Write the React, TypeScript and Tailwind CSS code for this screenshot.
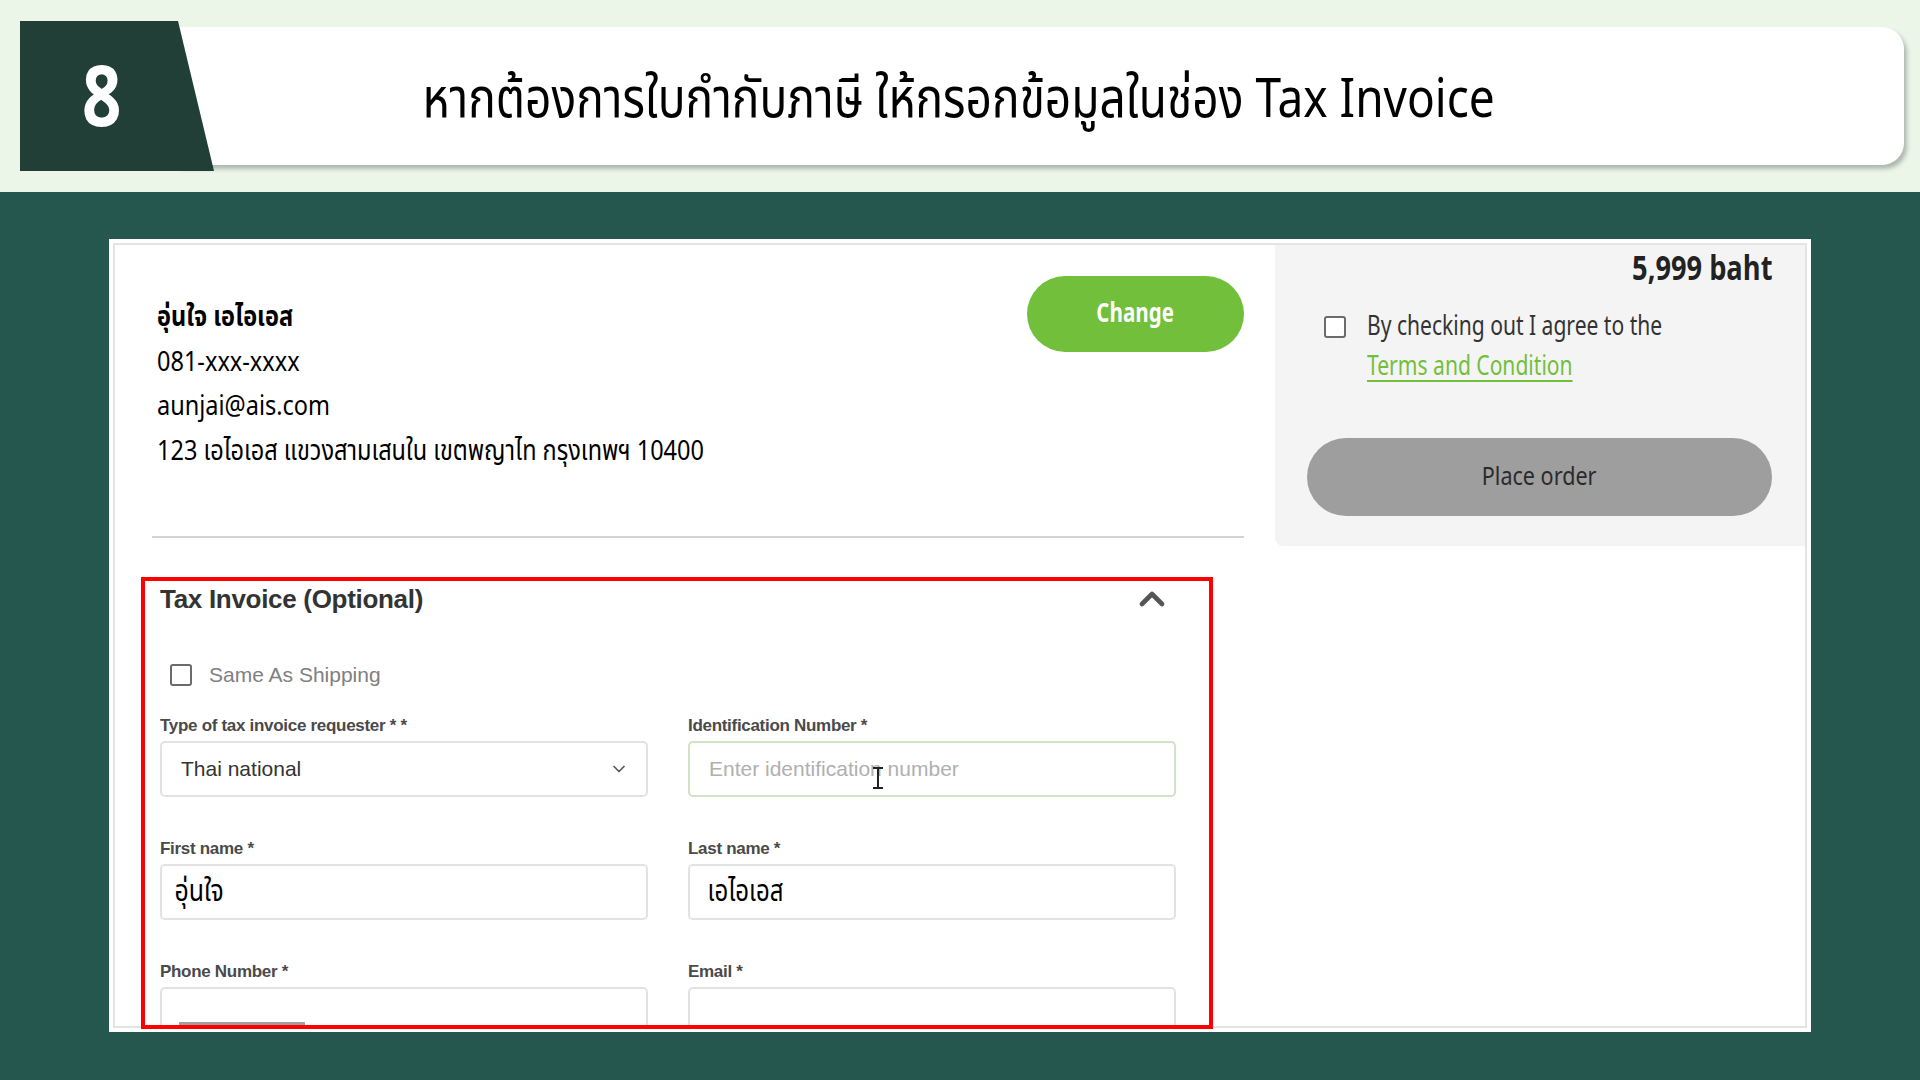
import { ChevronDown, ChevronUp } from "lucide-react";

// ฟอนต์ในภาพต้นฉบับเป็นแบบแคบ จึงบีบแนวนอนด้วย scale-x
const THAI = "font-['Noto_Sans_Thai','Noto_Sans',sans-serif]";
const SANS = "font-['Liberation_Sans','Noto_Sans_Thai','Noto_Sans',sans-serif]";

function Label({ text }: { text: string }) {
  return (
    <div className={`${SANS} h-[20px] text-[17px] leading-[20px] font-bold text-[#4a4a4a] tracking-[-0.3px]`}>
      {text}
    </div>
  );
}

function Field({ label, children }: { label: string; children?: React.ReactNode }) {
  return (
    <div className="flex flex-col">
      <Label text={label} />
      <div className="mt-[5px] h-[56px] rounded-[5px] border-2 border-[#e2e2e2] bg-white flex items-center relative">
        {children}
      </div>
    </div>
  );
}

function Box() {
  return <div className="w-[22px] h-[22px] rounded-[3px] border-2 border-[#6b6b6b] bg-white shrink-0" />;
}

export default function App() {
  return (
    <div className="w-[1920px] h-[1080px] overflow-hidden bg-[#26574e] flex flex-col">
      {/* หัวข้อขั้นตอน */}
      <div className="h-[192px] shrink-0 bg-[#ebf6e9] flex items-start pl-[20px] pt-[21px]">
        <div className="relative z-10 w-[194px] h-[150px] bg-[#213f36] [clip-path:polygon(0_0,158px_0,100%_100%,0_100%)] flex items-center pl-[62px] pt-[10px]">
          <span className={`${THAI} inline-block origin-left scale-x-[0.82] text-white text-[84px] leading-none font-bold`}>8</span>
        </div>
        <div className="-ml-[36px] mt-[6px] h-[138px] w-[1726px] bg-white rounded-r-[22px] shadow-[3px_4px_4px_rgba(0,0,0,0.25)] flex items-center justify-center pr-[164px] pt-[9px]">
          <span className={`${THAI} inline-block origin-center scale-x-[0.837] text-[55px] text-black leading-none whitespace-nowrap`}>
            หากต้องการใบกำกับภาษี ให้กรอกข้อมูลในช่อง Tax Invoice
          </span>
        </div>
      </div>

      {/* ภาพหน้าจอ checkout */}
      <div className="ml-[109px] mt-[47px] w-[1702px] h-[793px] shrink-0 bg-white p-[4px] overflow-hidden">
        <div className="h-full border-2 border-[#e4e4e4] flex">
          {/* คอลัมน์ซ้าย */}
          <div className="w-[1160px] shrink-0 flex flex-col">
            <div className="h-[291px] shrink-0 flex items-start justify-between pl-[42px] pr-[31px] pt-[31px]">
              <div className={`${THAI} mt-[20px] origin-left scale-x-[0.84] text-[28px] leading-[44.5px] text-black whitespace-nowrap`}>
                <div className="font-bold">อุ่นใจ เอไอเอส</div>
                <div>081-xxx-xxxx</div>
                <div>aunjai@ais.com</div>
                <div>123 เอไอเอส แขวงสามเสนใน เขตพญาไท กรุงเทพฯ 10400</div>
              </div>
              <button className="w-[217px] h-[76px] rounded-full bg-[#72bf3c] flex items-center justify-center">
                <span className={`${THAI} inline-block scale-x-[0.79] text-white text-[26px] font-bold`}>Change</span>
              </button>
            </div>
            <div className="ml-[37px] h-[2px] w-[1092px] shrink-0 bg-[#d4d4d4]" />

            {/* กรอบแดง Tax Invoice */}
            <div className="relative ml-[26px] mt-[39px] w-[1072px] h-[452px] shrink-0 border-[4px] border-[#ff0000] pl-[15px] pr-[33px] overflow-hidden">
              <div className="h-[36px] flex items-center justify-between pr-[4px]">
                <span className={`${SANS} text-[26px] font-bold text-[#333] tracking-[-0.3px]`}>Tax Invoice (Optional)</span>
                <ChevronUp className="w-[40px] h-[40px] text-[#555]" strokeWidth={2.8} />
              </div>
              <div className="mt-[43px] h-[30px] flex items-center gap-[17px] pl-[10px]">
                <Box />
                <span className={`${SANS} text-[21px] text-[#808080]`}>Same As Shipping</span>
              </div>
              <div className="mt-[26px] grid grid-cols-2 gap-x-[40px] gap-y-[42px]">
                <Field label="Type of tax invoice requester * *">
                  <span className={`${SANS} pl-[19px] text-[21px] text-[#333] flex-1`}>Thai national</span>
                  <ChevronDown className="w-[20px] h-[20px] mr-[17px] text-[#555]" strokeWidth={2} />
                </Field>
                <div className="flex flex-col">
                  <Label text="Identification Number *" />
                  <div className="mt-[5px] h-[56px] rounded-[5px] border-2 border-[#cfe3c6] bg-white flex items-center relative">
                    <span className={`${SANS} pl-[19px] text-[21px] text-[#b0b0b0]`}>Enter identification number</span>
                    <svg className="absolute left-[181px] top-[24px]" width="14" height="22" viewBox="0 0 14 22">
                      <path d="M2 1h10M7 1v20M2 21h10" stroke="#222" strokeWidth="2" fill="none" />
                    </svg>
                  </div>
                </div>
                <Field label="First name *">
                  <span className={`${THAI} inline-block origin-left scale-x-[0.83] pl-[15px] text-[30px] text-black`}>อุ่นใจ</span>
                </Field>
                <Field label="Last name *">
                  <span className={`${THAI} inline-block origin-left scale-x-[0.8] pl-[22px] text-[30px] text-black`}>เอไอเอส</span>
                </Field>
                <Field label="Phone Number *" />
                <Field label="Email *" />
              </div>
              {/* แถบเลื่อนด้านล่าง */}
              <div className="absolute left-[34px] bottom-0 w-[126px] h-[3px] bg-[#a0a0a0]" />
            </div>
          </div>

          {/* คอลัมน์ขวา สรุปยอด */}
          <div className="flex-1 flex flex-col items-start">
            <div className="w-full h-[301px] shrink-0 bg-[#f4f4f4] rounded-bl-[8px] flex flex-col pl-[32px] pr-[33px]">
              <div className={`${THAI} self-end mt-[5px] origin-right scale-x-[0.8] text-[34px] leading-[40px] font-bold text-[#222]`}>5,999 baht</div>
              <div className="mt-[17px] flex items-start gap-[21px] pl-[17px]">
                <div className="mt-[9px]"><Box /></div>
                <div className={`${THAI} origin-left scale-x-[0.78] text-[27px] leading-[40px] text-[#333] whitespace-nowrap`}>
                  <div>By checking out I agree to the</div>
                  <div className="text-[#72bf3c] underline decoration-2 underline-offset-[5px]">Terms and Condition</div>
                </div>
              </div>
              <button className="mt-[51px] w-[465px] h-[78px] rounded-full bg-[#9e9e9e] flex items-center justify-center">
                <span className={`${THAI} inline-block scale-x-[0.83] text-[#2b2b2b] text-[26px]`}>Place order</span>
              </button>
            </div>
          </div>
        </div>
      </div>
    </div>
  );
}
